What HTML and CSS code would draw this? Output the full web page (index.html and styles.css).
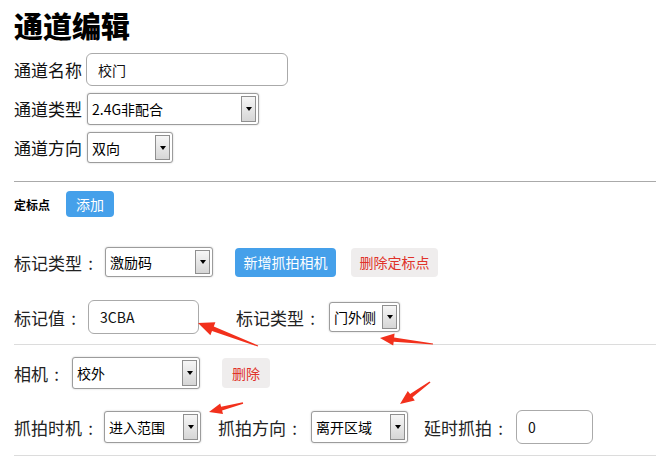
FILE: index.html
```html
<!DOCTYPE html>
<html lang="zh-CN">
<head>
<meta charset="utf-8">
<title>通道编辑</title>
<link rel="stylesheet" href="styles.css">
</head>
<body>
<div class="page">
  <h1 class="title">通道编辑</h1>
  <div class="frow">
    <span class="flabel">通道名称</span>
    <div class="inp inp-name">校门</div>
  </div>
  <div class="frow">
    <span class="flabel">通道类型</span>
    <div class="sel sel-type"><span class="sel-val">2.4G非配合</span><span class="sel-btn"></span></div>
  </div>
  <div class="frow">
    <span class="flabel">通道方向</span>
    <div class="sel sel-dir"><span class="sel-val">双向</span><span class="sel-btn"></span></div>
  </div>

  <div class="panel">
    <div class="prow prow-head">
      <span class="ptitle">定标点</span>
      <button class="btn btn-blue btn-add">添加</button>
    </div>

    <div class="prow prow-mark">
      <span class="plabel">标记类型<span class="colon">:</span></span>
      <div class="sel sel-mark"><span class="sel-val">激励码</span><span class="sel-btn"></span></div>
      <button class="btn btn-blue btn-newcam">新增抓拍相机</button>
      <button class="btn btn-gray btn-delpt">删除定标点</button>
    </div>

    <div class="prow prow-val">
      <span class="plabel">标记值<span class="colon">:</span></span>
      <div class="inp inp-val">3CBA</div>
      <span class="plabel plabel-type2">标记类型<span class="colon">:</span></span>
      <div class="sel sel-side"><span class="sel-val">门外侧</span><span class="sel-btn"></span></div>
    </div>

    <div class="hr"></div>

    <div class="prow prow-cam">
      <span class="plabel">相机<span class="colon">:</span></span>
      <div class="sel sel-cam"><span class="sel-val">校外</span><span class="sel-btn"></span></div>
      <button class="btn btn-gray btn-del">删除</button>
    </div>

    <div class="prow prow-cap">
      <span class="plabel">抓拍时机<span class="colon">:</span></span>
      <div class="sel sel-time"><span class="sel-val">进入范围</span><span class="sel-btn"></span></div>
      <span class="plabel plabel-dir">抓拍方向<span class="colon">:</span></span>
      <div class="sel sel-time"><span class="sel-val">离开区域</span><span class="sel-btn"></span></div>
      <span class="plabel plabel-delay">延时抓拍<span class="colon">:</span></span>
      <div class="inp inp-delay">0</div>
    </div>

    <div class="hr hr-cap"></div>
    <div class="more"></div>
  </div>
</div>

<svg class="marks" width="656" height="465" viewBox="0 0 656 465" aria-hidden="true">
  <polygon points="198,323 215.4,322.2 213.8,326.4 258.2,345.5 257.8,346.5 212,331 210.4,335.2"/>
  <polygon points="380,338 394.6,333.6 394.1,337.4 433.1,343.5 432.9,344.5 393.7,341.8 393.2,345.6"/>
  <polygon points="209,412 220.2,403.4 221.1,406.8 242.8,402.2 243.2,403.8 222.1,410.6 223,414"/>
  <polygon points="400,404 407.8,390.9 410.1,394.1 429.5,381.4 430.5,382.6 412.5,397.3 414.8,400.5"/>
</svg>
</body>
</html>
```

FILE: styles.css
```css
html, body {
  margin: 0;
  padding: 0;
  overflow: hidden;
  background: #fff;
}

body {
  font-family: "Noto Sans CJK SC", "Noto Sans", sans-serif;
  color: #111;
  position: relative;
  width: 656px;
  height: 465px;
}

.page {
  padding: 8px 0 0 14px;
}

.title {
  margin: 0 0 11px;
  font-size: 29px;
  line-height: 34px;
  font-weight: 900;
  color: #000;
}

.frow {
  display: flex;
  align-items: center;
  gap: 4px;
  font-size: 17px;
}

.frow + .frow {
  margin-top: 7px;
}

.flabel {
  line-height: 20px;
}

.colon {
  display: inline-block;
  width: 1em;
  text-align: center;
}

/* text input look */
.inp {
  box-sizing: border-box;
  display: flex;
  align-items: center;
  border: 1px solid #aaa;
  border-radius: 6px;
  background: #fff;
  font-size: 14px;
  color: #111;
  padding-left: 11px;
}

.inp-name {
  width: 202px;
  height: 33px;
}

/* select look */
.sel {
  box-sizing: border-box;
  display: flex;
  align-items: stretch;
  border: 1px solid #9c9c9c;
  border-radius: 3px;
  background: #fff;
  box-shadow: 0 0 2px rgba(0, 0, 0, 0.22);
  padding: 2px 2px 2px 0;
  font-size: 14px;
  color: #000;
}

.sel-val {
  flex: 1;
  display: flex;
  align-items: center;
  padding-left: 4px;
  white-space: nowrap;
  overflow: hidden;
}

.sel-btn {
  box-sizing: border-box;
  width: 15px;
  display: flex;
  align-items: center;
  justify-content: center;
  border: 1px solid #8f8f8f;
  background: linear-gradient(#f6f6f6, #d6d6d6);
}

.sel-btn::after {
  content: "";
  border-left: 3px solid transparent;
  border-right: 3px solid transparent;
  border-top: 4px solid #000;
}

.sel-type {
  width: 172px;
  height: 32px;
  margin-left: 1px;
}

.sel-dir {
  width: 86px;
  height: 31px;
  margin-left: 1px;
}

/* panel */
.panel {
  margin-top: 18px;
  height: 284px;
  border-top: 1px solid #aaa;
  overflow-y: scroll;
}

.panel::-webkit-scrollbar {
  width: 5px;
}

.panel::-webkit-scrollbar-track {
  background: #f0f0f0;
  border-left: 1px solid #dadada;
}

.panel::-webkit-scrollbar-thumb {
  background: #e0e0e0;
  border-left: 1px solid #c2c2c2;
  border-bottom: 1px solid #aaa;
}

.prow {
  display: flex;
  align-items: center;
  font-size: 17px;
}

.prow-head {
  margin-top: 9px;
  height: 26px;
}

.ptitle {
  font-size: 12px;
  font-weight: bold;
  color: #000;
  margin-right: 16px;
}

.btn {
  box-sizing: border-box;
  border: none;
  border-radius: 4px;
  font-family: inherit;
  font-size: 14px;
  padding: 0;
  display: flex;
  align-items: center;
  justify-content: center;
}

.btn-blue {
  background: #45a0ea;
  color: #fff;
}

.btn-gray {
  background: #efeded;
  color: #e0322a;
}

.btn-add {
  width: 48px;
  height: 26px;
}

.plabel {
  color: #222;
  white-space: nowrap;
}

.prow-mark {
  margin-top: 30px;
  height: 30px;
}

.prow-mark .plabel {
  margin-right: 6px;
}

.sel-mark {
  width: 108px;
  height: 30px;
}

.btn-newcam {
  width: 101px;
  height: 29px;
  margin-left: 22px;
}

.btn-delpt {
  width: 87px;
  height: 29px;
  margin-left: 15px;
}

.prow-val {
  margin-top: 23px;
  height: 34px;
}

.prow-val .plabel {
  margin-right: 6px;
}

.inp-val {
  width: 111px;
  height: 34px;
}

.prow-val .plabel-type2 {
  margin-left: 37px;
  margin-right: 8px;
}

.sel-side {
  width: 71px;
  height: 30px;
}

.hr {
  border-top: 1px solid #dcdcdc;
  margin-top: 10px;
}

.prow-cam {
  margin-top: 12px;
  height: 32px;
}

.prow-cam .plabel {
  margin-right: 7px;
}

.sel-cam {
  width: 128px;
  height: 32px;
}

.btn-del {
  width: 48px;
  height: 30px;
  margin-left: 22px;
}

.prow-cap {
  margin-top: 21px;
  height: 34px;
}

.prow-cap .plabel {
  margin-right: 5px;
}

.sel-time {
  width: 97px;
  height: 32px;
}

.prow-cap .plabel-dir {
  margin-left: 17px;
  margin-right: 8px;
}

.prow-cap .plabel-delay {
  margin-left: 16px;
  margin-right: 7px;
}

.inp-delay {
  width: 77px;
  height: 34px;
}

.hr-cap {
  margin-top: 11px;
}

.more {
  height: 150px;
}

.marks {
  position: absolute;
  left: 0;
  top: 0;
  pointer-events: none;
}

.marks polygon {
  fill: #f2301c;
}
```
